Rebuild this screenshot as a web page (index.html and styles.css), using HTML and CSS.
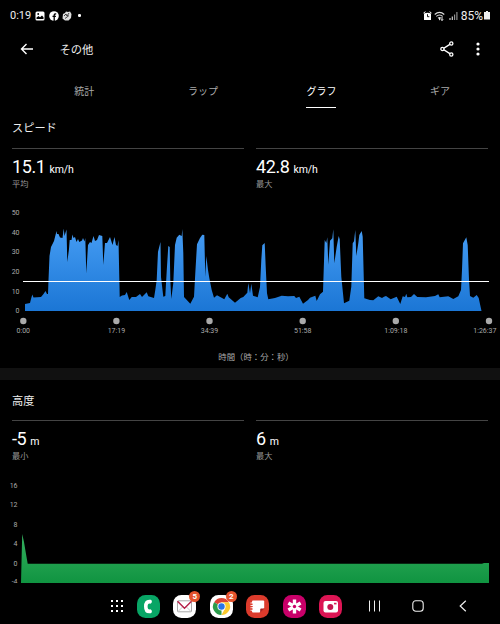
FILE: index.html
```html
<!DOCTYPE html>
<html lang="ja">

<head>
    <meta charset="UTF-8">
    <meta name="viewport" content="width=device-width, initial-scale=1.0">
    <title>その他</title>
    <link rel="stylesheet" href="styles.css">
</head>

<body>
    <header class="status">
        <span>0:19</span>
        <svg class="photo" width="10" height="10" viewBox="0 0 10 10">
            <rect x="0.5" y="0.5" width="9" height="9" rx="1.5" fill="#fff" />
            <path d="M1.5 8V6.5L3.5 5l1.5 1.3L7 4.5l1.5 1.7V8z" fill="#000" />
            <circle cx="3.2" cy="3" r="0.9" fill="#000" />
        </svg>
        <svg width="10" height="10" viewBox="0 0 10 10">
            <circle cx="5" cy="5" r="4.8" fill="#fff" />
            <path d="M5.2 10V4.2Q5.2 2.7 7.2 2.8M3.5 5.4h3.4" fill="none" stroke="#000" stroke-width="1.3" />
        </svg>
        <svg width="10" height="10" viewBox="0 0 10 10">
            <path d="M1 3l2-1 1-1.5L6 1l2-.5L9.5 3 9 7 6.5 9.5H3L.5 7.5z" fill="#ddd" />
            <path d="M2 5l2-2 1 2 2-3M3 7.5l4-3" fill="none" stroke="#000" stroke-width="0.7" />
        </svg>
        <i class="more"></i>
        <div class="signals">
            <svg width="9" height="10" viewBox="0 0 9 10">
                <path d="M.5 2L2.5.7M8.5 2L6.5.7" stroke="#fff" />
                <path d="M1 2.5Q4.5 0.8 8 2.5V9H1z" fill="#fff" />
                <path d="M4.5 3.2v2.5h1.8" fill="none" stroke="#000" stroke-width="0.9" />
            </svg>
            <svg class="wifi" width="12" height="10" viewBox="0 0 12 10">
                <path d="M.7 3.5Q5.5-.8 10.3 3.5M2.3 5.4Q5.5 2.6 8.7 5.4M4 7.2Q5.5 6 7 7.2" fill="none" stroke="#ddd" stroke-width="1.1" />
                <path d="M5.5 9.2V7M8 5.8v3.7M6.9 8.3L8 9.5l1.1-1.2" fill="none" stroke="#fff" stroke-width="0.9" />
            </svg>
            <svg width="9" height="10" viewBox="0 0 9 10">
                <path d="M1 9V7M3.3 9V5.5" stroke="#ddd" stroke-width="1.1" />
                <path d="M5.6 9V3.5M7.9 9V1" stroke="#999" stroke-width="1.1" />
            </svg>
            <span class="percent">85%</span>
            <svg width="6" height="9" viewBox="0 0 6 9">
                <path d="M2 0h2v1h2v7.5H0V1h2z" fill="#eee" />
            </svg>
        </div>
    </header>

    <nav class="appbar">
        <svg width="14" height="12" viewBox="0 0 14 12">
            <path d="M13 6H1.8M6.5 1L1.5 6l5 5" fill="none" stroke="#fff" stroke-width="1.4" />
        </svg>
        <h1>その他</h1>
        <svg class="share" width="14" height="16" viewBox="0 0 14 16">
            <path d="M11 2.7L2.7 8l8.3 5.3" fill="none" stroke="#fff" stroke-width="1.4" />
            <g fill="#000" stroke="#fff" stroke-width="1.3">
                <circle cx="11.3" cy="2.5" r="1.6" />
                <circle cx="2.4" cy="8" r="1.6" />
                <circle cx="11.3" cy="13.5" r="1.6" />
            </g>
        </svg>
        <svg width="4" height="14" viewBox="0 0 4 14" fill="#fff">
            <circle cx="2" cy="2" r="1.6" />
            <circle cx="2" cy="7" r="1.6" />
            <circle cx="2" cy="12" r="1.6" />
        </svg>
    </nav>

    <div class="tabs">
        <span>統計</span>
        <span>ラップ</span>
        <span class="active">グラフ</span>
        <span>ギア</span>
    </div>

    <section class="speed">
        <h2>スピード</h2>
        <div class="stats">
            <div class="stat">
                <p class="value">15.1<small>km/h</small></p>
                <p class="label">平均</p>
            </div>
            <div class="stat">
                <p class="value">42.8<small>km/h</small></p>
                <p class="label">最大</p>
            </div>
        </div>
        <svg class="chart" width="500" height="145" viewBox="0 200 500 145">
            <defs>
                <linearGradient id="blue" gradientUnits="userSpaceOnUse" x1="0" y1="229" x2="0" y2="311">
                    <stop offset="0" stop-color="#459cf3" />
                    <stop offset="1" stop-color="#1b76d5" />
                </linearGradient>
            </defs>
            <g class="axis" text-anchor="end">
                <text x="19.5" y="215">50</text>
                <text x="19.5" y="234.7">40</text>
                <text x="19.5" y="254.3">30</text>
                <text x="19.5" y="274">20</text>
                <text x="19.5" y="293.6">10</text>
                <text x="19.5" y="313.3">0</text>
            </g>
            <path fill="url(#blue)" d="M25 311V304L30 303 31 299 32.3 294.5 33.5 297.5 41 297 43.5 294 45.5 291 47 294 48 294
                48.5 280 49.5 256 51 247 54 241 56.5 231 57 234 58.5 234 60 237.5 62.5 238 63.7 228.5 64.5 236 66.5 229.5
                67.3 262 69 249 69.7 240 71.5 240 72.5 234.5 73.5 238 75 237 76.5 242 78 239 79.3 242 82 240.5 83 238
                84.5 241.5 85.3 238 86.3 273.5 88 245 90 242 91.5 243 93.5 236 95 241 97 240 99 235 102.3 236
                103.3 265 105 243 107 243 110 237 112.5 245 114.5 237 116 245 117.5 246 118.5 240 119.7 297
                122 295.5 125 295 126.7 292 129.3 300 131.7 297 136 297 140 294 142 297 146.7 292.3 148.3 296.3 154 298
                155.3 290 156.7 280 158 251.7 160.5 242 161 277 163.3 296.7 165.3 296 166.7 271.5 168.3 246 169.7 247
                170.3 280 171.3 299 173.3 283 175 245 176.7 237.7 179.3 234.7 181.7 236 182.3 229 183.3 253 184 297
                190.3 303.7 194 296.7 195.3 273 197 244.3 200 238 202.3 234.7 204.3 235 205.3 276.7 206.3 256 208 270
                209.3 278 211.7 290 214 297.7 217 295.3 224.3 299.3 227.3 293.7 228.7 297.3 235 302.7 240.7 298
                243.3 297 247.3 292.7 248.3 283 250 293.3 251.3 283.7 253 295.7 257.7 297.3 260 287 261.3 260
                262.3 245.3 264.7 243 265.7 266.7 267 293.3 268.3 299.3 275 298 281.7 295.7 288 296.2 294.3 296 296 298
                299.3 296.7 303 303.7 308 300 310 297.7 315.3 295.7 316.7 301 320 294.3 323 291.7 324.7 240 326.3 243
                327.3 237.3 328.3 264.7 330 240.7 332.3 238.3 333.3 229.3 334.3 263.3 336.7 246.7 338.7 236 339.7 239.3
                341.3 276.7 344 303.3 349.3 300.7 351.3 286.7 352.7 243.3 354 241.3 355.3 230 356.3 256 358.3 243.3
                359.3 235 361.7 231 362.7 236.7 364.3 298.3 370 300 373.3 300.3 378.3 296.3 382 298 384 296.7 386 296
                390.7 299.3 396.7 296.7 400.3 304 402.7 296.3 405 297 406.3 293.7 407.3 297.3 411 297 414 294 417.3 297
                426 297.3 435 296 438.3 294.3 439.7 297.3 448.3 296.3 453.3 299 458.3 296.3 461 290 462 270 463 243.3
                466.3 237.3 467.7 245 469 280 470 296 473.3 297.7 476.7 295 478.7 298 481.5 311z" />
            <path class="average" d="M23 281.5H489" />
            <g fill="#aaa">
                <circle cx="23.3" cy="321" r="3.2" />
                <circle cx="116.4" cy="321" r="3.2" />
                <circle cx="209.5" cy="321" r="3.2" />
                <circle cx="302.7" cy="321" r="3.2" />
                <circle cx="395.8" cy="321" r="3.2" />
                <circle cx="489" cy="321" r="3.2" />
            </g>
            <g class="axis" text-anchor="middle">
                <text x="23.3" y="333.3">0:00</text>
                <text x="116.4" y="333.3">17:19</text>
                <text x="209.5" y="333.3">34:39</text>
                <text x="302.7" y="333.3">51:58</text>
                <text x="395.8" y="333.3">1:09:18</text>
                <text x="484.8" y="333.3">1:26:37</text>
            </g>
        </svg>
        <p class="caption">時間（時：分：秒）</p>
    </section>

    <section class="altitude">
        <h2>高度</h2>
        <div class="stats">
            <div class="stat">
                <p class="value">-5<small>m</small></p>
                <p class="label">最小</p>
            </div>
            <div class="stat">
                <p class="value">6<small>m</small></p>
                <p class="label">最大</p>
            </div>
        </div>
        <svg class="chart" width="500" height="111" viewBox="0 472 500 111">
            <defs>
                <linearGradient id="green" gradientUnits="userSpaceOnUse" x1="0" y1="534" x2="0" y2="583">
                    <stop offset="0" stop-color="#35b05f" />
                    <stop offset="1" stop-color="#109441" />
                </linearGradient>
            </defs>
            <g class="axis" text-anchor="end">
                <text x="17.5" y="487.5">16</text>
                <text x="17.5" y="507">12</text>
                <text x="17.5" y="526.5">8</text>
                <text x="17.5" y="546">4</text>
                <text x="17.5" y="565.7">0</text>
                <text x="17.5" y="584">-4</text>
            </g>
            <path fill="url(#green)" d="M21 583L22.2 534 24 542 26 554 27.7 563.8H482L484 563H489V583z" />
        </svg>
    </section>

    <footer class="dock">
        <svg class="grid" width="14" height="14" viewBox="0 0 14 14">
            <path d="M1 2h12M1 7h12M1 12h12" stroke="#fff" stroke-width="2" stroke-dasharray="2 3" />
        </svg>
        <div class="app phone">
            <svg width="23" height="23" viewBox="0 0 23 23">
                <path d="M13.8 4.8Q7 3.7 7 11.5T13.8 18.2Q15 18 14.9 16.3T13.3 14.3Q10.6 15 10.6 11.5T13.3 8.7Q14.7 8.4 14.9 6.8 15 5.1 13.8 4.8z" fill="#fff" />
            </svg>
        </div>
        <div class="app mail">
            <svg width="23" height="23" viewBox="0 0 23 23">
                <rect x="4.5" y="5.8" width="14" height="11" rx="0.8" fill="#fff" stroke="#aaa" />
                <path d="M5 16.5l5-5M18 16.5l-5-5" stroke="#bbb" stroke-width="0.8" />
                <path d="M4.5 6.2l7 7 7-7" fill="none" stroke="#b51f48" stroke-width="1.4" />
            </svg>
            <b class="badge">5</b>
        </div>
        <div class="app chrome">
            <svg width="23" height="23" viewBox="0 0 23 23">
                <path d="M11.5 11.5L4.1 7.2A8.5 8.5 0 0 1 18.9 7.2H11.5z" fill="#dc4234" />
                <path d="M11.5 11.5V20A8.5 8.5 0 0 1 4.1 7.2z" fill="#2b9b4b" />
                <path d="M11.5 7.2H18.9A8.5 8.5 0 0 1 11.5 20L15 13.5z" fill="#fbc92c" />
                <circle cx="11.5" cy="11.5" r="4.1" fill="#fff" />
                <circle cx="11.5" cy="11.5" r="3.2" fill="#2875e8" />
            </svg>
            <b class="badge">2</b>
        </div>
        <div class="app notes">
            <svg width="23" height="23" viewBox="0 0 23 23">
                <path d="M7 5.5h10.2q1 0 1 1V13l-4.7 4.5H7q-1 0-1-1v-10q0-1 1-1z" fill="#fff" />
                <path d="M18.2 13.5l-4 4v-3q0-1 1-1z" fill="#a92020" />
                <path d="M4.5 8h3M4.5 10.4h3M4.5 12.8h3M4.5 15.2h3" stroke="#fff" />
                <path d="M5 9.2h2M5 11.6h2M5 14h2" stroke="#dc3b2c" stroke-width="0.8" />
            </svg>
        </div>
        <div class="app gallery">
            <svg width="23" height="23" viewBox="0 0 23 23">
                <path d="M11.5 4.5v14M5.4 8l12.2 7M5.4 15l12.2-7" stroke="#fff" stroke-width="3.4" />
                <circle cx="11.5" cy="11.5" r="1.7" fill="#c90069" />
            </svg>
        </div>
        <div class="app camera">
            <svg width="23" height="23" viewBox="0 0 23 23">
                <rect x="4.5" y="6" width="14.5" height="11.5" rx="2" fill="#fff" />
                <circle cx="11.3" cy="12" r="3" fill="#c4164f" />
                <rect x="15" y="7.8" width="2.5" height="1.6" fill="#d91b56" />
            </svg>
        </div>
        <svg class="recents" width="12" height="12" viewBox="0 0 12 12">
            <path d="M1.5 0.5v11M6.5 0.5v11M11.5 0.5v11" stroke="#eee" />
        </svg>
        <svg class="home" width="12" height="12" viewBox="0 0 12 12">
            <rect x="0.8" y="0.8" width="10.4" height="10.4" rx="3" fill="none" stroke="#eee" stroke-width="1.1" />
        </svg>
        <svg class="back" width="8" height="12" viewBox="0 0 8 12">
            <path d="M6.8 0.7L1.2 6l5.6 5.3" fill="none" stroke="#eee" stroke-width="1.2" />
        </svg>
    </footer>
</body>

</html>
```

FILE: styles.css
```css
* {
    box-sizing: border-box;
}

body {
    margin: 0;
    width: 500px;
    height: 624px;
    overflow: hidden;
    background-color: black;
    color: #eee;
    font-family: Roboto, "Noto Sans CJK JP", sans-serif;
}

svg {
    display: block;
    flex: none;
}

h1,
h2,
p {
    margin: 0;
    font-weight: 400;
}

.status {
    display: flex;
    align-items: center;
    height: 31px;
    padding: 0 10px;
    font-size: 11px;
}

.status .photo {
    margin-left: 4px;
}

.status svg + svg {
    margin-left: 3.5px;
}

.more {
    width: 2.5px;
    height: 2.5px;
    margin-left: 6px;
    border-radius: 50%;
    background: #fff;
}

.signals {
    display: flex;
    align-items: center;
    margin-left: auto;
}

.signals svg + svg {
    margin-left: 2.5px;
}

.percent {
    margin: 0 1px 0 3px;
    font-size: 12px;
}

.appbar {
    display: flex;
    align-items: center;
    height: 36px;
    padding: 0 20px;
}

.appbar h1 {
    margin: 0 auto 0 25.5px;
    font-size: 11.3px;
}

.share {
    margin-right: 22px;
}

.tabs {
    display: grid;
    grid-template-columns: repeat(4, 118.6px);
    justify-items: center;
    height: 41px;
    padding-left: 25px;
    font-size: 10px;
    line-height: 30px;
    color: #aaa;
}

.tabs span {
    padding-top: 10px;
    border-bottom: 1px solid transparent;
}

.tabs .active {
    color: #fff;
    border-color: #fff;
}

h2 {
    font-size: 11.2px;
    line-height: 20px;
}

.speed {
    height: 260px;
}

.speed h2 {
    padding: 11px 12px 9px;
}

.altitude {
    height: 215px;
    border-top: 12px solid #111;
}

.altitude h2 {
    padding: 12px 12px 8px;
}

.stats {
    display: grid;
    grid-template-columns: 1fr 1fr;
    gap: 12px;
    height: 52px;
    padding: 0 12px;
}

.stat {
    border-top: 1px solid #444;
}

.value {
    margin-top: 7px;
    font-size: 18px;
    line-height: 21px;
    letter-spacing: -0.4px;
    color: #fff;
}

.value small {
    margin-left: 4px;
    font-size: 10.5px;
    letter-spacing: -0.1px;
}

.label {
    margin-top: -2px;
    font-size: 8.2px;
    line-height: 12px;
    color: #999;
}

.axis {
    font-size: 7px;
    fill: #aaa;
}

.average {
    stroke: #fff;
}

.caption {
    padding-left: 12px;
    font-size: 8.4px;
    line-height: 25px;
    text-align: center;
    color: #aaa;
}

.dock {
    display: flex;
    align-items: center;
    height: 41px;
    padding: 5px 0 0 110px;
}

.grid {
    margin-right: 13px;
}

.app {
    position: relative;
    width: 23px;
    height: 23px;
    margin-right: 13.4px;
    border-radius: 8.5px;
}

.phone {
    background: #08a565;
}

.mail,
.chrome {
    background: #fff;
}

.notes {
    background: #dc3b2c;
}

.gallery {
    background: #c90069;
}

.camera {
    background: #dd1554;
}

.badge {
    position: absolute;
    top: -4px;
    right: -4px;
    width: 11px;
    height: 11px;
    border-radius: 50%;
    background: #e5532d;
    color: #fff;
    font-size: 8px;
    line-height: 11px;
    text-align: center;
}

.recents {
    margin-left: 12.5px;
}

.home {
    margin-left: 32.5px;
}

.back {
    margin-left: 34.5px;
}
```
